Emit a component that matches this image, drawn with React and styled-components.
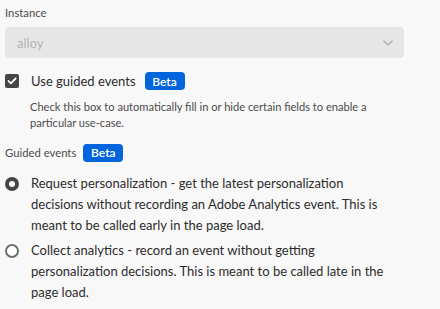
import React from "react";
import styled, { createGlobalStyle } from "styled-components";

const Global = createGlobalStyle`
  html, body {
    margin: 0;
    background: #f8f8f8;
    font-family: Lato, "Open Sans", sans-serif;
  }
`;

const Page = styled.div`
  padding: 5px 36px 0 5px;
  display: flex;
  flex-direction: column;
`;

const FieldLabel = styled.div`
  font-size: 11.3px;
  color: #4b4b4b;
  line-height: 16px;
  display: flex;
  align-items: center;
  gap: 7px;
`;

const Picker = styled.div`
  margin-top: 6px;
  height: 31px;
  width: 399px;
  box-sizing: border-box;
  border-radius: 4px;
  background: #e6e6e6;
  display: flex;
  align-items: center;
  justify-content: space-between;
  padding: 0 11px 0 12px;
  font-size: 13px;
  color: #b3b3b3;
`;

const CheckRow = styled.label`
  margin-top: 14px;
  display: flex;
  align-items: center;
  gap: 12px;
  font-size: 13px;
  color: #2c2c2c;
  height: 18px;
`;

const Box = styled.span`
  width: 14px;
  height: 14px;
  border-radius: 2px;
  background: #464646;
  display: flex;
  align-items: center;
  justify-content: center;
  flex-shrink: 0;
`;

const Badge = styled.span`
  display: inline-flex;
  align-items: center;
  justify-content: center;
  width: 40px;
  height: 18px;
  border-radius: 4px;
  background: #0265dc;
  color: #fff;
  font-size: 12px;
  font-weight: 600;
  margin-left: ${(p) => p.$shift || 0}px;
`;

const Help = styled.p`
  margin: 9px 0 0 25px;
  font-size: 11.1px;
  line-height: 16px;
  color: #4b4b4b;
`;

const GroupLabel = styled(FieldLabel)`
  margin-top: 13px;
  height: 18px;
`;

const RadioRow = styled.label`
  margin-top: ${(p) => p.$top}px;
  display: flex;
  align-items: flex-start;
  gap: 12px;
  font-size: 13px;
  line-height: 21px;
  color: #2c2c2c;
`;

const RadioText = styled.span`
  max-width: 360px;
`;

const Radio = styled.span`
  margin-top: 4px;
  width: 14px;
  height: 14px;
  box-sizing: border-box;
  border-radius: 50%;
  flex-shrink: 0;
  background: #fff;
  border: ${(p) => (p.$on ? "4px solid #464646" : "2px solid #6e6e6e")};
`;

const Chevron = () => (
  <svg width="10" height="6" viewBox="0 0 10 6">
    <path d="M1 1l4 4 4-4" fill="none" stroke="#b3b3b3" strokeWidth="1.6" strokeLinecap="round" strokeLinejoin="round" />
  </svg>
);

const Check = () => (
  <svg width="10" height="8" viewBox="0 0 10 8">
    <path d="M1.5 4l2.3 2.4L8.6 1.5" fill="none" stroke="#fff" strokeWidth="1.8" strokeLinecap="round" strokeLinejoin="round" />
  </svg>
);

export default function App() {
  return (
    <>
      <Global />
      <Page>
        <FieldLabel>Instance</FieldLabel>
        <Picker>
          <span>alloy</span>
          <Chevron />
        </Picker>
        <CheckRow>
          <Box><Check /></Box>
          <span>Use guided events</span>
          <Badge $shift={-3}>Beta</Badge>
        </CheckRow>
        <Help>
          Check this box to automatically fill in or hide certain fields to enable a
          particular use-case.
        </Help>
        <GroupLabel>
          Guided events <Badge>Beta</Badge>
        </GroupLabel>
        <RadioRow $top={11}>
          <Radio $on />
          <RadioText>
            Request personalization - get the latest personalization decisions without
            recording an Adobe Analytics event. This is meant to be called early in the
            page load.
          </RadioText>
        </RadioRow>
        <RadioRow $top={4}>
          <Radio />
          <RadioText>
            Collect analytics - record an event without getting personalization
            decisions. This is meant to be called late in the page load.
          </RadioText>
        </RadioRow>
      </Page>
    </>
  );
}
